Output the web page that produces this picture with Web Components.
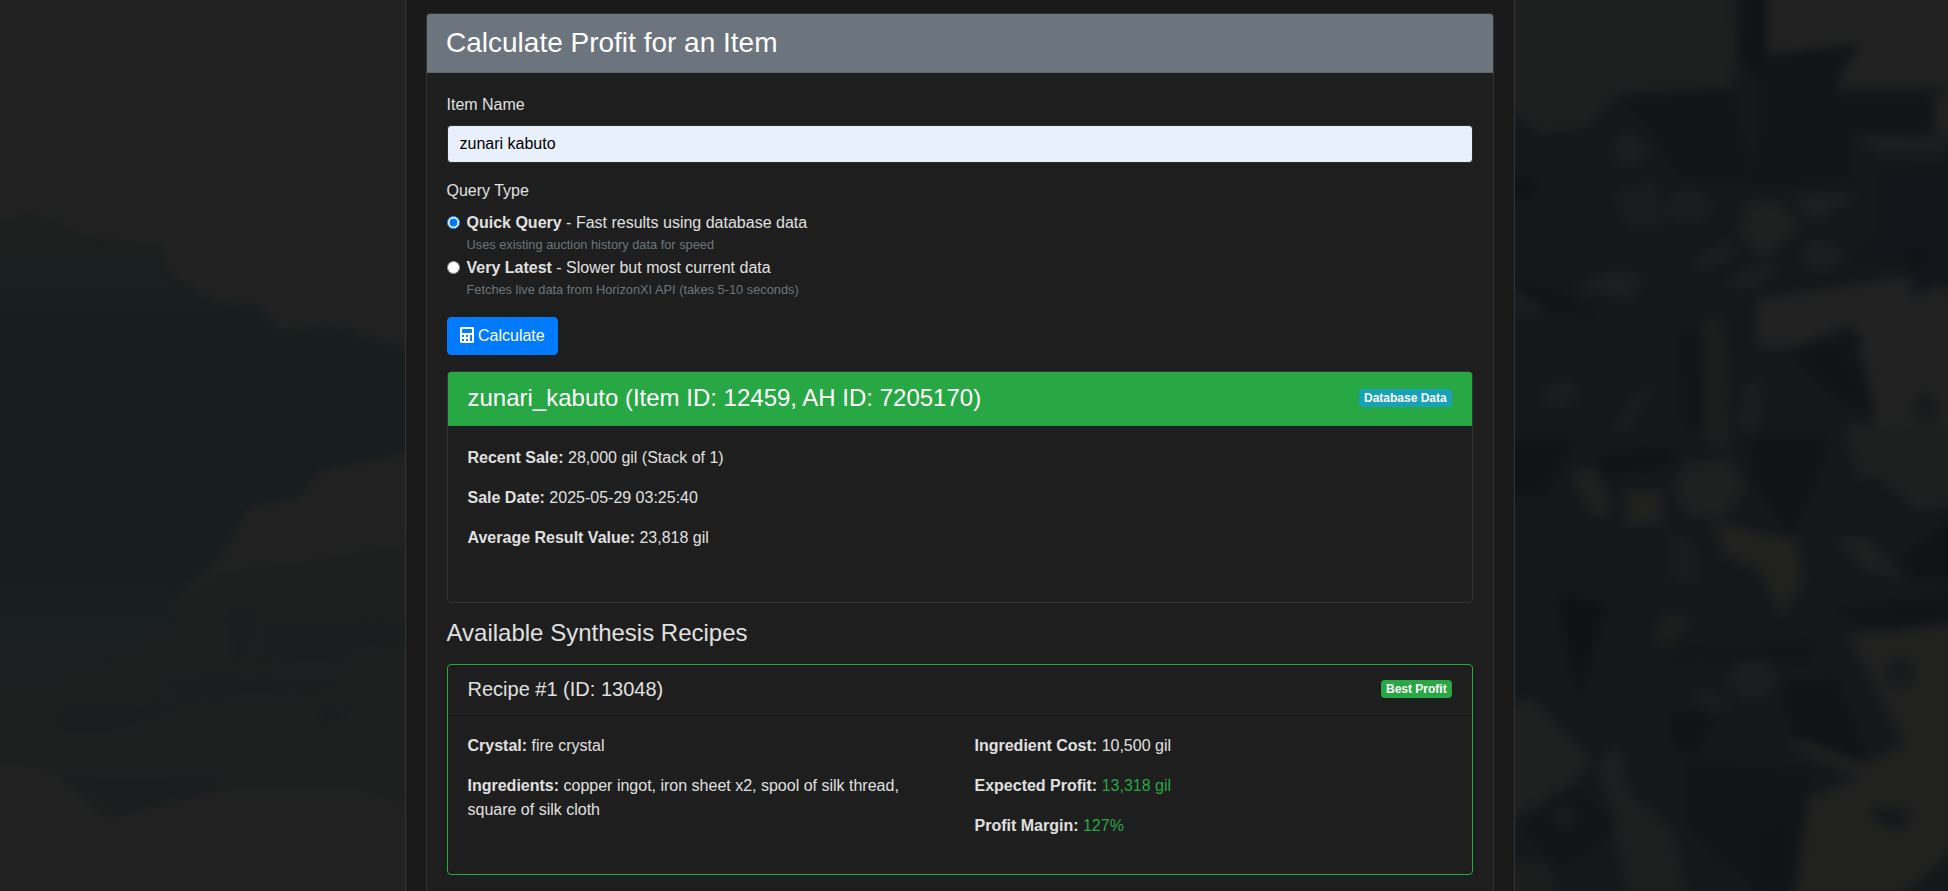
<!DOCTYPE html>
<html lang="en">
<head>
<meta charset="utf-8">
<title>Calculate Profit for an Item</title>
<style>
html,body{margin:0;padding:0;height:100%;overflow:hidden;background:#222}
body{font:16px/24px "Liberation Sans",Arial,sans-serif;color:#e0e0e0;width:1948px}
</style>
</head>
<body>
<page-backdrop></page-backdrop>
<page-container>
  <panel-card heading="Calculate Profit for an Item">
    <form-field label="Item Name"><text-box value="zunari kabuto"></text-box></form-field>
    <form-field label="Query Type">
      <radio-option name="q" checked note="Uses existing auction history data for speed"><b>Quick Query</b> - Fast results using database data</radio-option>
      <radio-option name="q" note="Fetches live data from HorizonXI API (takes 5-10 seconds)"><b>Very Latest</b> - Slower but most current data</radio-option>
    </form-field>
    <action-button>Calculate</action-button>
    <result-card heading="zunari_kabuto (Item ID: 12459, AH ID: 7205170)" badge="Database Data">
      <stat-line label="Recent Sale:">28,000 gil (Stack of 1)</stat-line>
      <stat-line label="Sale Date:">2025-05-29 03:25:40</stat-line>
      <stat-line label="Average Result Value:">23,818 gil</stat-line>
    </result-card>
    <section-title>Available Synthesis Recipes</section-title>
    <recipe-card heading="Recipe #1 (ID: 13048)" badge="Best Profit">
      <stat-line slot="left" label="Crystal:">fire crystal</stat-line>
      <stat-line slot="left" label="Ingredients:">copper ingot, iron sheet x2, spool of silk thread, square of silk cloth</stat-line>
      <stat-line slot="right" label="Ingredient Cost:">10,500 gil</stat-line>
      <stat-line slot="right" label="Expected Profit:" tone="good">13,318 gil</stat-line>
      <stat-line slot="right" label="Profit Margin:" tone="good">127%</stat-line>
    </recipe-card>
  </panel-card>
</page-container>
<script>
function def(name, html){
  customElements.define(name, class extends HTMLElement{
    connectedCallback(){
      if(this.shadowRoot) return;
      const r=this.attachShadow({mode:'open'});
      r.innerHTML=typeof html==='function'?html(this):html;
    }
  });
}
const esc=s=>(s||'').replace(/&/g,'&amp;').replace(/"/g,'&quot;').replace(/</g,'&lt;');

def('page-backdrop',`<style>:host{position:fixed;inset:0;display:block;z-index:0}svg{display:block;width:1948px;height:891px}</style>
<svg viewBox="0 0 1948 891" xmlns="http://www.w3.org/2000/svg">
<defs>
<filter id="b4" color-interpolation-filters="sRGB" filterUnits="userSpaceOnUse" x="1400" y="-100" width="700" height="1100"><feGaussianBlur stdDeviation="5.5"/></filter>
<filter id="bl" color-interpolation-filters="sRGB" filterUnits="userSpaceOnUse" x="-100" y="100" width="600" height="900"><feGaussianBlur stdDeviation="4"/></filter>
<linearGradient id="lg" gradientUnits="userSpaceOnUse" x1="0" y1="205" x2="0" y2="700"><stop offset="0" stop-color="#1d2120"/><stop offset=".25" stop-color="#181e1e"/><stop offset=".6" stop-color="#161d1e"/><stop offset=".85" stop-color="#1a1f1f"/><stop offset="1" stop-color="#1d2020"/></linearGradient>
</defs>
<rect width="1948" height="891" fill="#222"/>
<!-- left landscape -->
<g filter="url(#bl)">
  <polygon fill="#1e2020" points="-20,640 180,600 220,570 300,560 420,540 420,810 350,790 215,790 100,820 50,770 -20,765"/>
  <polygon fill="url(#lg)" points="-20,227 33,210 77,233 117,241 163,244 167,273 217,301 263,307 280,332 327,324 420,352 420,449 317,472 300,497 250,506 217,563 177,597 173,623 120,660 -20,700"/>
  <g fill="#1a1e1e">
    <polygon points="260,620 350,620 420,625 420,640 350,650 340,665 260,660"/>
    <polygon points="155,680 330,675 330,690 180,700"/>
    <polygon points="60,710 110,710 170,700 170,712 110,735 60,735"/>
    <polygon points="320,710 350,705 340,725 322,725"/>
    <polygon points="230,610 255,610 250,660 232,660"/>
    <polygon points="60,775 240,780 215,790 120,815"/>
  </g>
</g>
<!-- right foliage, authored on a 3x grid -->
<g filter="url(#b4)"><g transform="translate(1515 0) scale(.33333)">
  <rect x="-60" y="-60" width="1420" height="2800" fill="#15181a"/>
  <!-- lighter shapes, upper half -->
  <polygon fill="#1e2020" points="-60,-60 650,-60 660,140 650,260 300,280 210,380 80,400 -60,300"/>
  <polygon fill="#222" points="760,-60 1360,-60 1360,260 960,260 1040,130 760,160"/>
  <polygon fill="#222" points="1260,280 1360,260 1360,420 1260,400"/>
  <polygon fill="#1d2020" points="1020,410 1360,420 1270,460 1100,460"/>
  <polygon fill="#1f2020" points="690,610 780,600 860,680 740,770 680,700"/>
  <polygon fill="#1e1f1f" points="830,590 1030,580 900,660"/>
  <ellipse cx="920" cy="765" rx="55" ry="40" fill="#1c1e1e"/>
  <ellipse cx="345" cy="450" rx="48" ry="50" fill="#1b1e1f"/>
  <polygon fill="#1a1d1e" points="300,580 420,540 450,680 340,680"/>
  <ellipse cx="520" cy="620" rx="65" ry="55" fill="#1a1d1e"/>
  <ellipse cx="600" cy="770" rx="70" ry="22" transform="rotate(-30 600 770)" fill="#1c1e1e"/>
  <ellipse cx="710" cy="830" rx="75" ry="24" transform="rotate(-20 710 830)" fill="#1c1e1e"/>
  <polygon fill="#222" points="730,900 1000,860 1200,830 1360,900 1360,1400 1100,1400 1060,1100 1000,970 830,1040 730,1040"/>
  <polygon fill="#1c1f1f" points="170,870 300,810 390,830 340,900 260,880"/>
  <polygon fill="#1b1e1f" points="-60,820 60,900 80,950 -60,950"/>
  <polygon fill="#1d1f1e" points="570,960 620,960 640,1335 580,1335"/>
  <polygon fill="#1c1e1e" points="700,1150 740,1150 720,1300 670,1280"/>
  <polygon fill="#1b1d1d" points="350,1200 420,1140 330,1300 300,1290"/>
  <polygon fill="#1b1d1e" points="90,1160 170,1140 190,1200 100,1230"/>
  <!-- darker shapes, upper half -->
  <polygon fill="#0f1316" points="700,-60 745,-60 745,250 680,180"/>
  <polygon fill="#111518" points="740,170 1040,130 960,240 940,390 740,400"/>
  <polygon fill="#111518" points="950,290 1250,290 1260,380 950,400"/>
  <polygon fill="#111518" points="320,300 650,270 700,540 500,540 420,400"/>
  <polygon fill="#121518" points="740,400 1000,400 1000,540 700,560"/>
  <polygon fill="#13161a" points="1100,520 1360,500 1360,830 1190,890 1180,780 1000,800 1100,700"/>
  <ellipse cx="1205" cy="770" rx="40" ry="28" fill="#0f1316"/>
  <polygon fill="#101316" points="-60,540 60,530 50,590 -60,590"/>
  <polygon fill="#101417" points="-20,830 130,880 260,950 120,930 -20,860"/>
  <polygon fill="#111417" points="820,1050 990,1030 1080,1250 960,1190"/>
  <ellipse cx="1010" cy="1020" rx="32" ry="30" fill="#121518"/>
  <ellipse cx="1230" cy="1225" rx="45" ry="45" fill="#181b1c"/>
  <polygon fill="#111417" points="500,1000 550,1000 550,1280 510,1280"/>
  <!-- lighter shapes, lower half -->
  <g transform="translate(0 1335)">
    <polygon fill="#202120" points="170,90 240,70 290,190 240,220"/>
    <polygon fill="#212120" points="330,140 440,140 440,230 340,240"/>
    <polygon fill="#1f2020" points="510,60 640,40 690,130 620,220 520,210 480,130"/>
    <polygon fill="#212120" points="600,230 850,290 860,420 800,510 740,380 620,320"/>
    <polygon fill="#1f2020" points="960,280 1050,280 1160,400 1050,370"/>
    <polygon fill="#1e2020" points="990,-60 1360,-60 1360,180 1200,190 1100,100 1030,90"/>
    <polygon fill="#212120" points="1000,570 1360,530 1360,1180 1100,1400 840,1400 880,1060 1040,1000 820,900 860,890 1050,960 1170,900 1060,680"/>
    <ellipse cx="1155" cy="685" rx="45" ry="48" fill="#181b1c"/>
    <polygon fill="#15181a" points="1060,1090 1190,1090 1170,1150 1090,1140"/>
    <polygon fill="#1e1f1e" points="440,510 530,520 470,600 430,600"/>
    <polygon fill="#1f2020" points="-60,770 60,770 230,950 160,1020 -60,1150"/>
    <ellipse cx="715" cy="700" rx="70" ry="60" fill="#1b1e1e"/>
    <polygon fill="#1d1f1f" points="250,960 310,900 340,1050 470,1150 520,1400 350,1400 290,1090"/>
    <polygon fill="#1c1e1e" points="-60,1240 100,1260 130,1400 -60,1400"/>
    <polygon fill="#1b1e1e" points="530,730 600,740 650,800 560,780"/>
    <polygon fill="#1a1d1d" points="470,260 530,290 550,420 470,400"/>
    <!-- darker shapes, lower half -->
    <polygon fill="#0e1215" points="250,40 480,10 480,50 270,90"/>
    <polygon fill="#0f1316" points="700,-20 940,-20 900,100 830,260 730,130"/>
    <polygon fill="#0e1215" points="130,450 270,480 190,750"/>
    <polygon fill="#0f1316" points="1180,320 1360,200 1360,400 1180,400"/>
    <polygon fill="#111417" points="-60,-20 180,-20 100,140 -60,170"/>
    <polygon fill="#101316" points="800,720 960,700 1050,950 840,870"/>
    <polygon fill="#101316" points="470,800 590,820 540,920 470,900"/>
    <polygon fill="#121518" points="520,950 880,980 880,1050 800,1400 520,1150"/>
    <polygon fill="#121518" points="20,1150 170,1030 310,1130 200,1240 130,1270"/>
    <ellipse cx="150" cy="1115" rx="35" ry="30" fill="#1a1d1e"/>
    <polygon fill="#111417" points="730,1150 820,1130 820,1338 720,1300"/>
    <polygon fill="#111417" points="960,500 1360,440 1360,530 1100,560"/>
    <polygon fill="#121518" points="480,620 900,590 880,650 470,640"/>
  </g>
</g></g>
</svg>`);

def('page-container',`<style>
:host{display:block;position:relative;z-index:1;box-sizing:border-box;width:1110px;height:891px;margin-left:404.5px;padding:13px 20px 0;background:#1a1a1a;border-left:1px solid #333;border-right:1px solid #333;overflow:hidden}
</style><slot></slot>`);

def('panel-card',h=>`<style>
:host{display:block;background:#1e1e1e;border:1px solid #333;border-radius:4px;min-height:1000px}
header{background:#6c757d;color:#fff;padding:12px 19.5px;border-bottom:1px solid #5c646c;border-radius:3px 3px 0 0;font-size:28px;line-height:33.6px;font-weight:400}
.body{padding:20px}
</style><header>${esc(h.getAttribute('heading'))}</header><div class="body"><slot></slot></div>`);

def('form-field',h=>`<style>
:host{display:block;margin-bottom:16px}
.l{display:block;margin-bottom:8px;color:#e0e0e0}
</style><span class="l">${esc(h.getAttribute('label'))}</span><slot></slot>`);

def('text-box',h=>`<style>
:host{display:block}
input{display:block;box-sizing:border-box;width:100%;height:38px;padding:6px 12px;margin:0;font:16px/24px "Liberation Sans",Arial,sans-serif;color:#000;background:#e8f0fe;border:1px solid #2a2a2a;border-radius:4px;outline:0}
</style><input type="text" value="${esc(h.getAttribute('value'))}">`);

def('radio-option',h=>`<style>
:host{display:block;position:relative;padding-left:20px;height:45px}
input{position:absolute;left:0;top:5.5px;width:13px;height:13px;margin:0}
label{display:block;color:#e0e0e0}
small{display:block;font-size:12.8px;line-height:19.2px;margin-top:.8px;color:#6c757d}
::slotted(b){font-weight:700}
</style><input type="radio" name="${esc(h.getAttribute('name'))}" ${h.hasAttribute('checked')?'checked':''}><label><slot></slot></label><small>${esc(h.getAttribute('note'))}</small>`);

def('action-button',`<style>
:host{display:block;margin-bottom:16px}
button{display:inline-flex;align-items:center;gap:4.5px;box-sizing:border-box;height:38px;padding:6px 12px;font:16px/24px "Liberation Sans",Arial,sans-serif;color:#fff;background:#007bff;border:1px solid #007bff;border-radius:4px}
svg{width:14px;height:16px;fill:#fff;display:block;margin-top:-1px}
</style><button type="button"><svg viewBox="0 0 448 512" aria-hidden="true"><path d="M400 0H48C22.4 0 0 22.4 0 48v416c0 25.6 22.4 48 48 48h352c25.6 0 48-22.4 48-48V48c0-25.6-22.4-48-48-48zM128 435.2c0 6.4-6.4 12.8-12.8 12.8H76.8c-6.4 0-12.8-6.4-12.8-12.8v-38.4c0-6.4 6.4-12.8 12.8-12.8h38.4c6.4 0 12.8 6.4 12.8 12.8v38.4zm0-128c0 6.4-6.4 12.8-12.8 12.8H76.8c-6.4 0-12.8-6.4-12.8-12.8v-38.4c0-6.4 6.4-12.8 12.8-12.8h38.4c6.4 0 12.8 6.4 12.8 12.8v38.4zm128 128c0 6.4-6.4 12.8-12.8 12.8h-38.4c-6.4 0-12.8-6.4-12.8-12.8v-38.4c0-6.4 6.4-12.8 12.8-12.8h38.4c6.4 0 12.8 6.4 12.8 12.8v38.4zm0-128c0 6.4-6.4 12.8-12.8 12.8h-38.4c-6.4 0-12.8-6.4-12.8-12.8v-38.4c0-6.4 6.4-12.8 12.8-12.8h38.4c6.4 0 12.8 6.4 12.8 12.8v38.4zm128 128c0 6.4-6.4 12.8-12.8 12.8h-38.4c-6.4 0-12.8-6.4-12.8-12.8V268.8c0-6.4 6.4-12.8 12.8-12.8h38.4c6.4 0 12.8 6.4 12.8 12.8v166.4zm0-256c0 6.4-6.4 12.8-12.8 12.8H76.8c-6.4 0-12.8-6.4-12.8-12.8V76.8C64 70.4 70.4 64 76.8 64h294.4c6.4 0 12.8 6.4 12.8 12.8v102.4z"/></svg><slot></slot></button>`);

def('pill-badge',h=>`<style>
:host{display:inline-block;font-size:12px;line-height:12px;font-weight:700;padding:3px 4.8px;border-radius:4px;color:#fff;background:${h.getAttribute('tone')==='good'?'#28a745':'#17a2b8'}}
</style><slot></slot>`);

def('result-card',h=>`<style>
:host{display:block;border:1px solid #333;border-radius:4px;margin-bottom:16px}
header{display:flex;justify-content:space-between;align-items:center;background:#28a745;color:#fff;padding:12px 20px 12.6px;border-bottom:1px solid #2a9a46;border-radius:3px 3px 0 0;font-size:24px;line-height:28.8px}
.body{padding:20px 20px 36.4px}
</style><header><span>${esc(h.getAttribute('heading'))}</span><pill-badge>${esc(h.getAttribute('badge'))}</pill-badge></header><div class="body"><slot></slot></div>`);

def('section-title',`<style>:host{display:block;font-size:24px;line-height:28.8px;margin-bottom:16px;color:#e0e0e0}</style><slot></slot>`);

def('recipe-card',h=>`<style>
:host{display:block;border:1px solid #28a745;border-radius:4px;margin-bottom:16px}
header{display:flex;justify-content:space-between;align-items:center;padding:12px 20px;border-bottom:1px solid #252525;font-size:20px;line-height:24px;color:#e0e0e0}
.body{display:grid;grid-template-columns:477px 477px;column-gap:30px;padding:20px}
</style><header><span>${esc(h.getAttribute('heading'))}</span><pill-badge tone="good">${esc(h.getAttribute('badge'))}</pill-badge></header><div class="body"><div><slot name="left"></slot></div><div><slot name="right"></slot></div></div>`);

def('stat-line',h=>`<style>
:host{display:block;margin-bottom:16px;color:#e0e0e0}
b{font-weight:700}
.v{color:${h.getAttribute('tone')==='good'?'#28a745':'inherit'}}
</style><b>${esc(h.getAttribute('label'))}</b> <span class="v"><slot></slot></span>`);
</script>
</body>
</html>
